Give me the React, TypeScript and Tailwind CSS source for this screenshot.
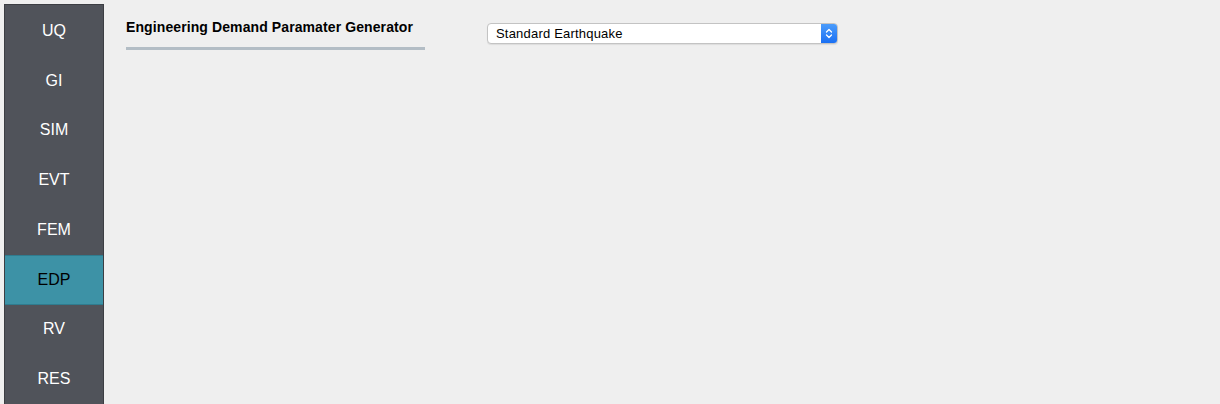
import { useState } from "react";

export default function App() {
  const items = ["UQ", "GI", "SIM", "EVT", "FEM", "EDP", "RV", "RES"];
  const [active, setActive] = useState("EDP");

  return (
    <div
      className="w-[1220px] h-[404px] bg-[#efefef] flex overflow-hidden"
      style={{ fontFamily: '"Liberation Sans", Arial, sans-serif' }}
    >
      <div className="ml-[4px] mt-[4px] w-[100px] h-[400px] bg-[#50535a] border-l border-r border-t border-[#3c3e43] pt-px flex flex-col">
        {items.map((item) => (
          <button
            key={item}
            onClick={() => setActive(item)}
            className={
              item === active
                ? "h-[50px] w-full flex items-center justify-center text-[16px] bg-[#3d92a6] text-black border-t border-b border-[#2f7c8f]"
                : "h-[50px] w-full flex items-center justify-center text-[16px] text-white"
            }
          >
            {item}
          </button>
        ))}
      </div>

      <div className="flex items-start pl-[22px] pt-[19px]">
        <div className="w-[299px]">
          <div className="text-[14px] font-bold text-black leading-[17px] tracking-[0.1px]">
            Engineering Demand Paramater Generator
          </div>
          <div className="mt-[11px] h-[3px] bg-[#b3bdc5]" />
        </div>

        <div className="ml-[62px] mt-[4px] w-[351px] h-[21px] bg-white border border-[#c3c3c3] rounded-[4px] flex items-center shadow-[0_1px_1px_rgba(0,0,0,0.08)] overflow-hidden">
          <span className="flex-1 pl-[8px] text-[13px] text-black leading-none tracking-[0.2px]">
            Standard Earthquake
          </span>
          <div className="w-[16px] h-full bg-gradient-to-b from-[#4b9cfb] to-[#1a6ff3] flex items-center justify-center">
            <svg width="8" height="13" viewBox="0 0 8 13" fill="none">
              <path d="M1.5 5 L4 2.5 L6.5 5" stroke="white" strokeWidth="1.3" strokeLinecap="round" strokeLinejoin="round" />
              <path d="M1.5 8 L4 10.5 L6.5 8" stroke="white" strokeWidth="1.3" strokeLinecap="round" strokeLinejoin="round" />
            </svg>
          </div>
        </div>
      </div>
    </div>
  );
}
